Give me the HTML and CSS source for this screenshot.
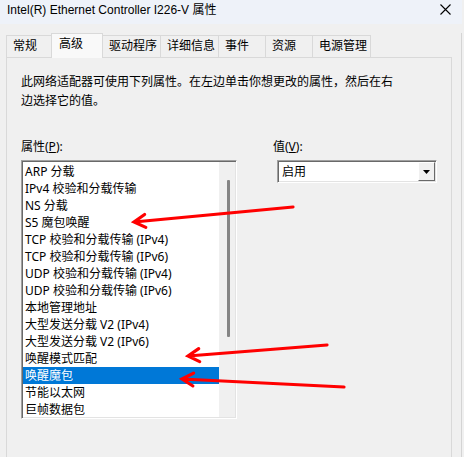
FILE: index.html
```html
<!DOCTYPE html>
<html lang="zh-CN">
<head>
    <meta charset="UTF-8">
    <title>Intel(R) Ethernet Controller I226-V 属性</title>
    <link rel="stylesheet" href="styles.css">
</head>
<body>
    <div class="window">
        <div class="titlebar">
            <span class="title">Intel(R) Ethernet Controller I226-V 属性</span>
            <svg class="close" width="11" height="11" viewBox="0 0 11 11">
                <path d="M0.5 0.5 L10.5 10.5 M10.5 0.5 L0.5 10.5" stroke="#000" stroke-width="1.1" fill="none"/>
            </svg>
        </div>

        <div class="dialog">
            <div class="tabs">
                <div class="tab">常规</div>
                <div class="tab selected">高级</div>
                <div class="tab">驱动程序</div>
                <div class="tab">详细信息</div>
                <div class="tab">事件</div>
                <div class="tab">资源</div>
                <div class="tab">电源管理</div>
            </div>

            <div class="panel">
                <p class="desc">此网络适配器可使用下列属性。在左边单击你想更改的属性，然后在右<br>边选择它的值。</p>

                <div class="fields">
                    <div class="field-left">
                        <div class="label">属性(<u>P</u>):</div>
                        <div class="listbox">
                            <ul class="items">
                                <li>ARP 分载</li>
                                <li>IPv4 校验和分载传输</li>
                                <li>NS 分载</li>
                                <li>S5 魔包唤醒</li>
                                <li>TCP 校验和分载传输 (IPv4)</li>
                                <li>TCP 校验和分载传输 (IPv6)</li>
                                <li>UDP 校验和分载传输 (IPv4)</li>
                                <li>UDP 校验和分载传输 (IPv6)</li>
                                <li>本地管理地址</li>
                                <li>大型发送分载 V2 (IPv4)</li>
                                <li>大型发送分载 V2 (IPv6)</li>
                                <li>唤醒模式匹配</li>
                                <li class="active">唤醒魔包</li>
                                <li>节能以太网</li>
                                <li>巨帧数据包</li>
                            </ul>
                            <div class="scrollbar">
                                <div class="thumb"></div>
                            </div>
                        </div>
                    </div>

                    <div class="field-right">
                        <div class="label">值(<u>V</u>):</div>
                        <div class="select">
                            <span class="select-value">启用</span>
                            <span class="select-button">
                                <svg width="7" height="4" viewBox="0 0 7 4"><path d="M0 0 H7 L3.5 4 Z" fill="#000"/></svg>
                            </span>
                        </div>
                    </div>
                </div>
            </div>
        </div>

        <svg class="arrows" width="464" height="457" viewBox="0 0 464 457">
            <g stroke="#ff0000" stroke-width="3.2" stroke-linecap="round" fill="none">
                <path d="M293 207 L134 222 M145.8 227.4 L134 222 L144.6 214.5"/>
                <path d="M327 345 L188 356 M199.7 361.6 L188 356 L198.7 348.6"/>
                <path d="M344 387 L182 379 M192.9 386 L182 379 L193.6 373.1"/>
            </g>
        </svg>
    </div>
</body>
</html>
```

FILE: styles.css
```css
body {
    margin: 0;
    font-family: "Noto Sans", "Noto Sans CJK SC", sans-serif;
    font-size: 12px;
    color: #000;
    background-color: #f0f0f0;
    overflow: hidden;
}
.window {
    position: relative;
    width: 464px;
    height: 457px;
    overflow: hidden;
}
.titlebar {
    display: flex;
    justify-content: space-between;
    align-items: flex-start;
    width: 462px;
    height: 24px;
    box-sizing: border-box;
    padding: 1px 11px 0 7px;
    background-color: #eef2f9;
    line-height: 18px;
}
.title {
    font-family: "Liberation Sans", "Noto Sans CJK SC", sans-serif;
    font-size: 12px;
}
.close {
    margin-top: 3px;
}
.dialog {
    width: 462px;
    height: 433px;
    box-sizing: border-box;
    padding-left: 6px;
    border-right: 1px solid #d4d4d4;
    background-color: #f0f0f0;
}
.tabs {
    display: flex;
    align-items: flex-end;
    height: 25px;
    margin-top: 9px;
    position: relative;
    z-index: 1;
}
.tab {
    box-sizing: border-box;
    min-width: 48px;
    height: 22px;
    margin-bottom: 1px;
    padding: 1px 3px 0 6px;
    border: 1px solid #d9d9d9;
    border-bottom: none;
    margin-right: -1px;
    background-color: #f0f0f0;
    line-height: 18px;
    white-space: nowrap;
}
.tab:first-child {
    min-width: 47px;
}
.tab.selected {
    min-width: 52px;
    height: 25px;
    margin-bottom: 0;
    margin-left: -1px;
    padding-left: 7px;
    background-color: #f9f9f9;
    border-color: #d9d9d9;
}
.panel {
    width: 446px;
    height: 420px;
    box-sizing: border-box;
    margin-top: -1px;
    border: 1px solid #d9d9d9;
    background-color: #f0f0f0;
    padding: 14px 0 0 14px;
}
.desc {
    margin: 0;
    line-height: 19px;
}
.fields {
    display: flex;
    margin-top: 28px;
}
.label {
    line-height: 18px;
    margin-bottom: 4px;
}
.field-left {
    width: 252px;
}
.listbox {
    display: flex;
    width: 216px;
    height: 259px;
    box-sizing: border-box;
    border: 1px solid;
    border-color: #a0a0a0 #ffffff #ffffff #a0a0a0;
    box-shadow: inset 1px 1px #696969, inset -1px -1px #e3e3e3;
    background-color: #fff;
    padding: 1px;
    overflow: hidden;
}
.items {
    list-style: none;
    margin: 0;
    padding: 1px 0 0 0;
    width: 196px;
    overflow: hidden;
}
.items li {
    height: 17px;
    line-height: 17px;
    padding-left: 2px;
    white-space: nowrap;
}
.items li.active {
    background-color: #0078d7;
    color: #fff;
}
.scrollbar {
    position: relative;
    width: 16px;
    background-color: #f0f0f0;
}
.thumb {
    width: 3px;
    height: 157px;
    margin: 18px 0 0 8px;
    border-radius: 1px;
    background-color: #858585;
}
.field-right {
    flex: 1;
}
.select {
    display: flex;
    justify-content: space-between;
    width: 160px;
    height: 23px;
    box-sizing: border-box;
    margin-left: 4px;
    margin-top: 2px;
    border: 1px solid;
    border-color: #a0a0a0 #ffffff #ffffff #a0a0a0;
    box-shadow: inset 1px 1px #696969, inset -1px -1px #e3e3e3;
    background-color: #fff;
    padding: 1px;
}
.select-value {
    padding-left: 3px;
    line-height: 20px;
}
.select-button {
    display: flex;
    align-items: center;
    justify-content: center;
    width: 17px;
    height: 19px;
    box-sizing: border-box;
    border: 1px solid;
    border-color: #ffffff #696969 #696969 #ffffff;
    background-color: #f0f0f0;
}
.arrows {
    position: absolute;
    left: 0;
    top: 0;
    pointer-events: none;
}
```
